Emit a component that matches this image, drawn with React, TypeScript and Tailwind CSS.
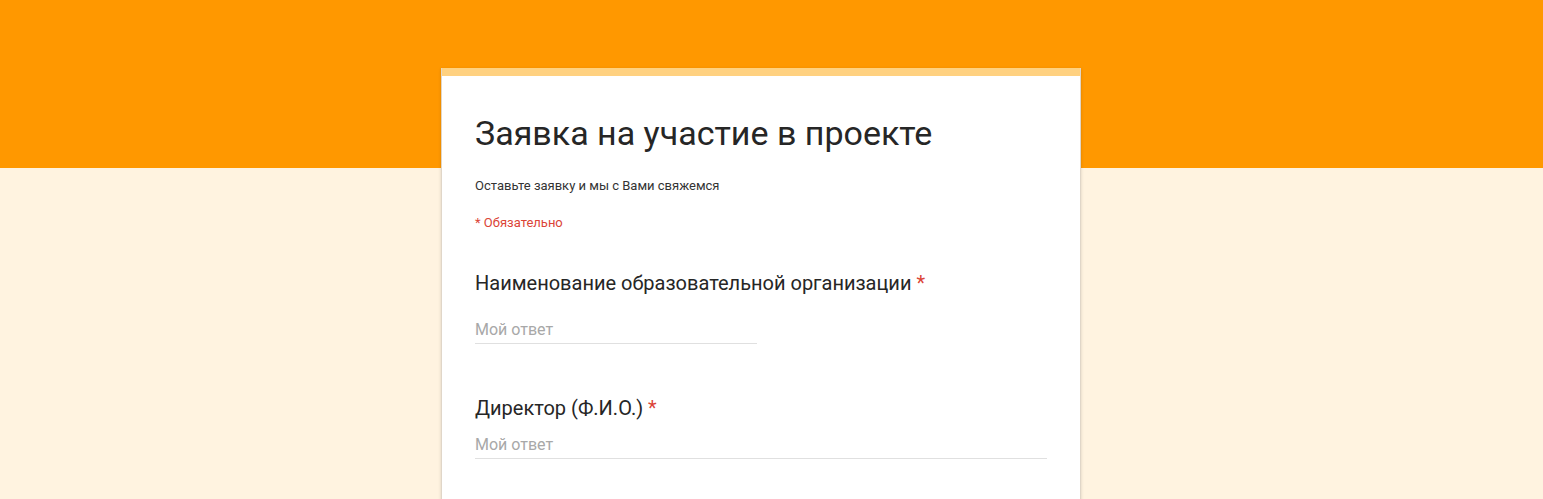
import React from 'react';

const font = { fontFamily: 'Roboto, "Noto Sans", Arial, sans-serif' };

const App: React.FC = () => {
  return (
    <div className="min-h-[499px] bg-[#fff3e0] relative overflow-hidden" style={font}>
      {/* orange header band */}
      <div className="absolute top-0 left-0 right-0 h-[168px] bg-[#ff9800]" />

      <div className="relative flex justify-center pt-[68px] pr-[21px]">
        <div className="w-[640px] bg-white border-x border-[#e0d6c8] shadow-[0_1px_3px_rgba(0,0,0,0.15)]">
          <div className="h-[8px] bg-[#ffd180]" />

          <div className="pl-[33px] pr-[33px]">
            <h1 className="text-[34px] leading-[40px] font-normal text-[#262626] pt-[37px]">Заявка на участие в проекте</h1>
            <p className="text-[13px] leading-[20px] text-[#333333] mt-[23px]">Оставьте заявку и мы с Вами свяжемся</p>
            <p className="text-[13px] leading-[20px] text-[#db4437] mt-[17px]">* Обязательно</p>

            <div className="mt-[36px]">
              <div className="text-[20px] leading-[28px] text-[#262626]">
                Наименование образовательной организации <span className="text-[#db4437]">*</span>
              </div>
              <div className="mt-[21px] w-[282px] border-b border-[#e0e0e0] pb-[1px] text-[16px] leading-[24px] text-[#a8a8a8]">
                Мой ответ
              </div>
            </div>

            <div className="mt-[50px]">
              <div className="text-[20px] leading-[28px] text-[#262626]">
                Директор (Ф.И.О.) <span className="text-[#db4437]">*</span>
              </div>
              <div className="mt-[11px] w-[572px] border-b border-[#e0e0e0] pb-[1px] text-[16px] leading-[24px] text-[#a8a8a8]">
                Мой ответ
              </div>
            </div>
            <div className="h-[60px]" />
          </div>
        </div>
      </div>
    </div>
  );
};

export default App;
